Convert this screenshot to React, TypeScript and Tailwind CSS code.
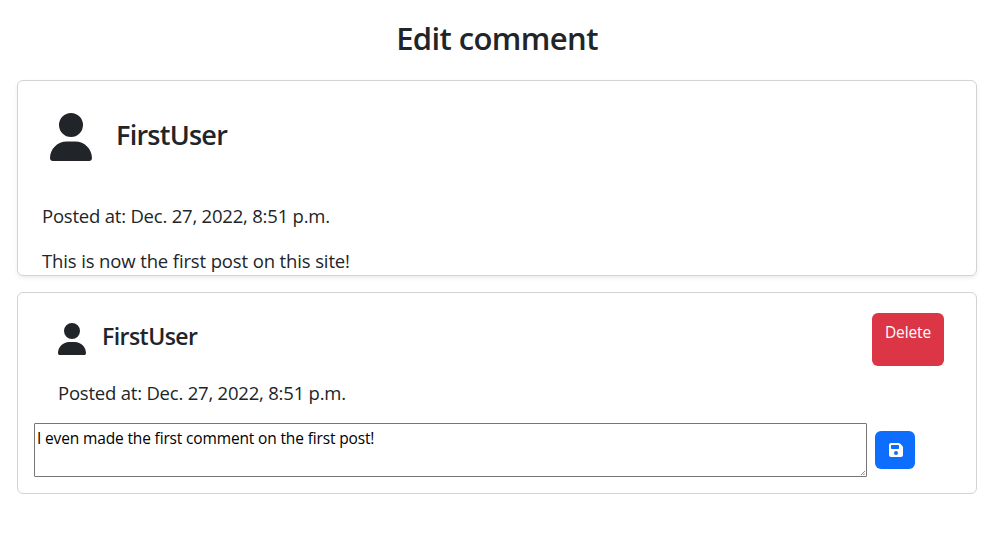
import { FaUser, FaFloppyDisk } from "react-icons/fa6";

const font = "font-['Open_Sans','Noto_Sans',sans-serif]";
const bodyText = "text-[18.5px] leading-[27px] tracking-[-0.21px]";

export default function App() {
  return (
    <main className={`${font} h-[536px] overflow-hidden bg-white px-[17px] text-[#212529]`}>
      <h1 className="flex h-20 items-center justify-center pr-[2px] pb-1 text-[31px] font-semibold tracking-[-0.6px]">
        <span>Edit comment</span>
      </h1>
      <section className="mr-[2px] h-[196px] overflow-hidden rounded-md border border-[#d3d3d4] px-6 shadow-[0_2px_4px_rgba(0,0,0,0.075)]">
        <header className="flex pt-8 pl-2">
          <FaUser className="h-12 w-[42px]" />
          <h2 className="ml-6 pt-1 text-[27px] leading-9 font-semibold tracking-[-0.75px]">FirstUser</h2>
        </header>
        <p className={`mt-[41px] ${bodyText}`}>Posted at: Dec. 27, 2022, 8:51 p.m.</p>
        <p className="mt-[18px] text-[18.5px] leading-[27px] tracking-[-0.13px]">This is now the first post on this site!</p>
      </section>
      <section className="mt-4 mr-[2px] h-[202px] rounded-md border border-[#d3d3d4] px-4">
        <header className="flex items-start pt-5 pr-4 pl-6">
          <FaUser className="mt-[10px] h-8 w-7" />
          <h3 className="mt-[7px] ml-4 text-[23px] leading-8 font-semibold tracking-[-0.55px]">FirstUser</h3>
          <button className="ml-auto h-[53px] w-[72px] rounded-md bg-[#dc3545] pb-[13px] text-[15.5px] tracking-[-0.1px] text-white">Delete</button>
        </header>
        <p className={`mt-[13px] pl-6 ${bodyText}`}>Posted at: Dec. 27, 2022, 8:51 p.m.</p>
        <form className="mt-[17px] flex">
          <div className="relative h-[54px] w-[833px]">
            <textarea className="block h-full w-full resize-none rounded-[1px] border border-[#767676] p-[2px] text-[15.5px] leading-6 tracking-[-0.15px] text-black" defaultValue="I even made the first comment on the first post!" />
            <svg className="absolute right-[2px] bottom-[2px] h-[4px] w-[4px]" viewBox="0 0 4 4" fill="none" stroke="#555" strokeWidth=".7">
              <path d="M0 4 4 0M2.3 4 4 2.3" />
            </svg>
          </div>
          <button type="button" className="mt-2 ml-2 flex h-[38px] w-10 items-center justify-center rounded-md bg-[#0d6efd] text-white">
            <FaFloppyDisk className="ml-px h-4 w-4" />
          </button>
        </form>
      </section>
    </main>
  );
}
